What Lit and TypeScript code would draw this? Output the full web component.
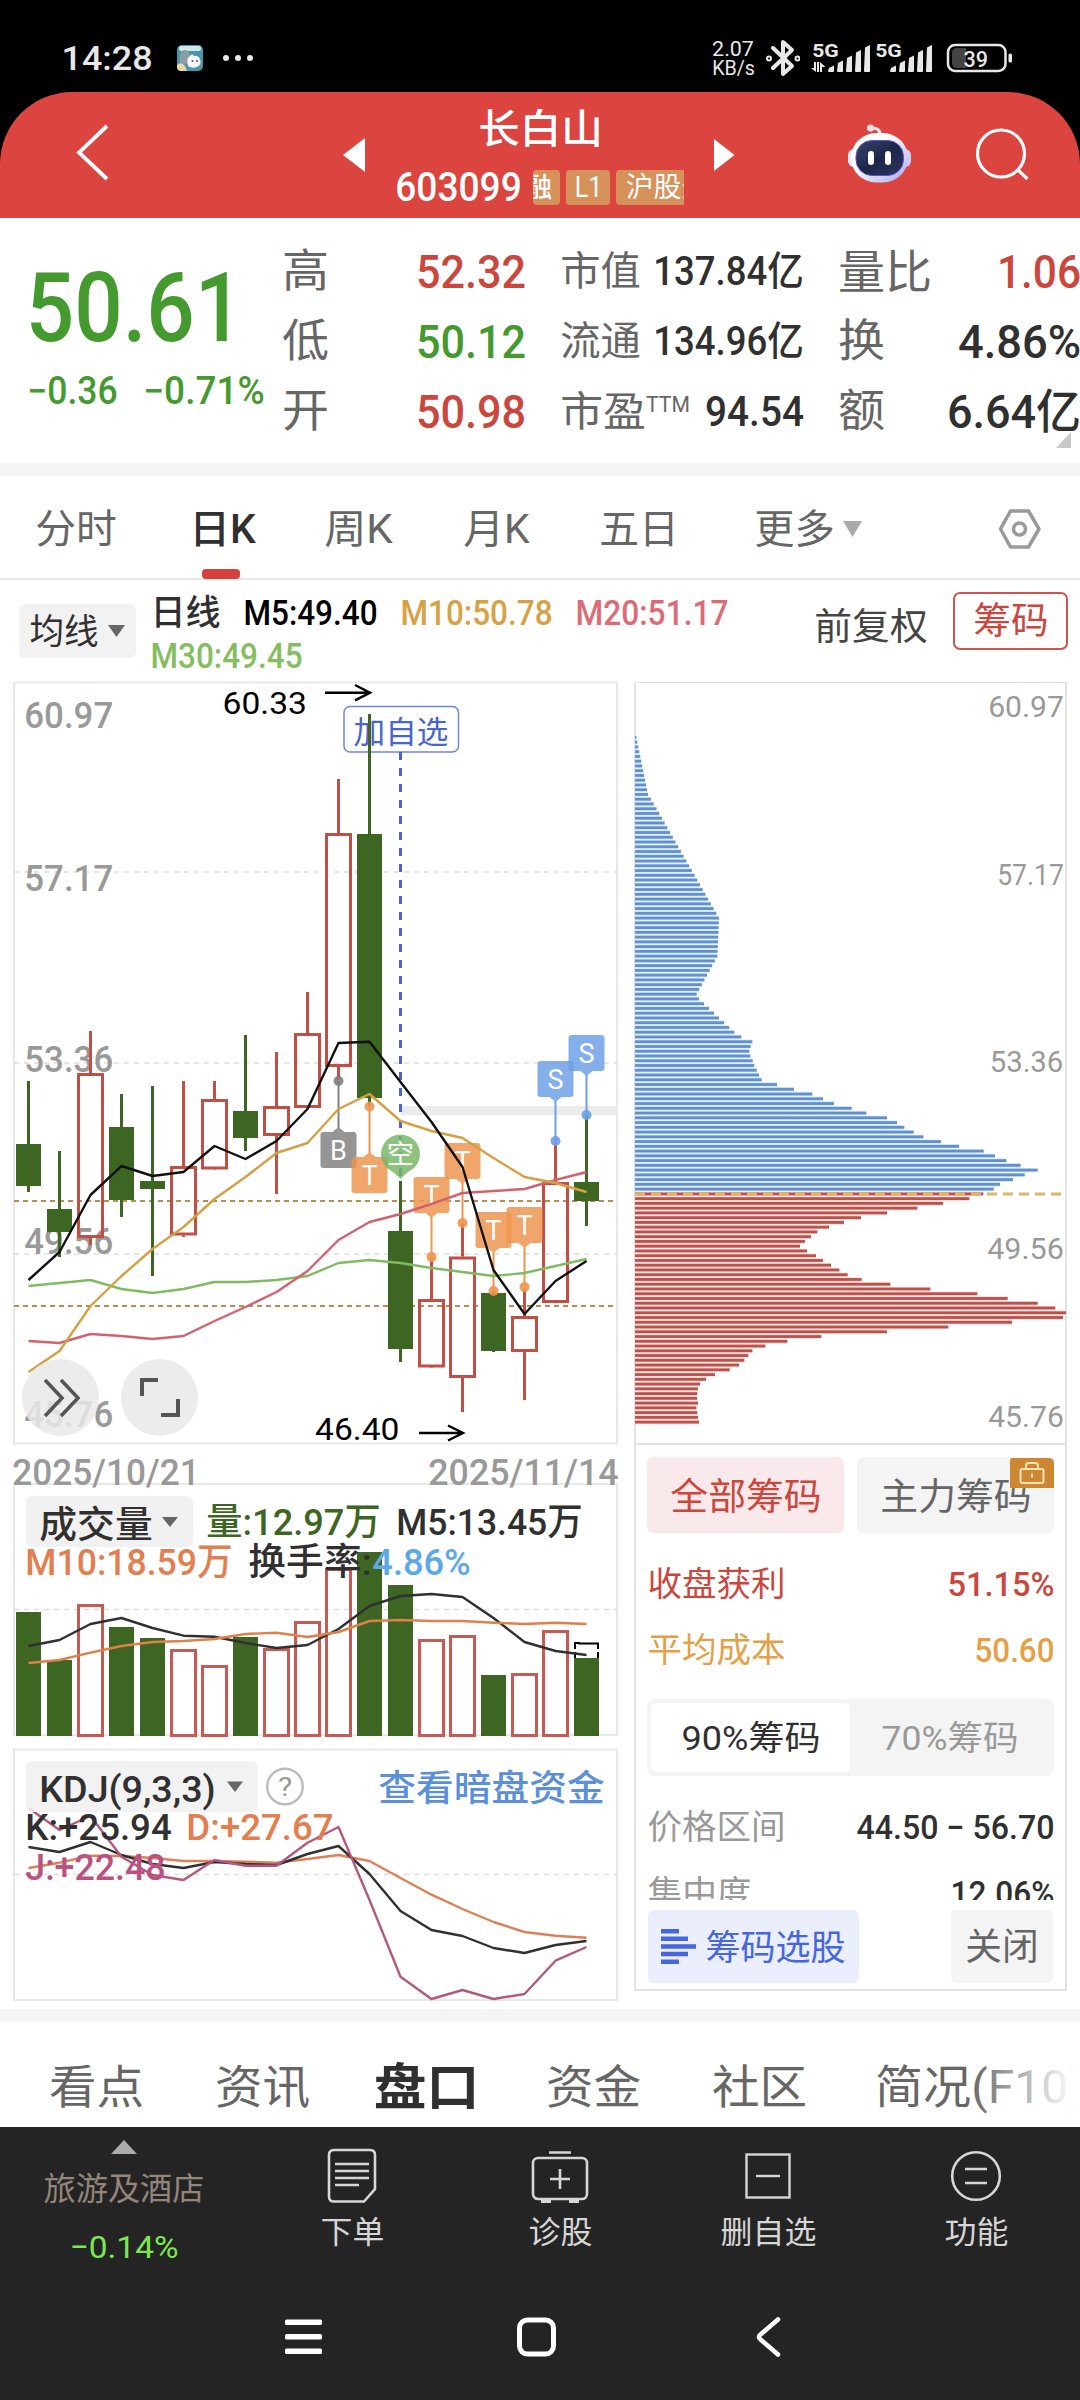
import { LitElement, html, svg, css } from "lit";
import { customElement } from "lit/decorators.js";

type Pt = [number, number];

/** One line of text set to an exact advance width; the box is as tall as the glyphs. */
const fit = (s: string, w: number, size: number, cls = "") => {
  const b = size * 0.045;
  return html`<svg class="fit ${cls}" width=${w} height=${size * 0.74}>
    <text x=${-b} y=${size * 0.73} font-size=${size} textLength=${w + 2 * b} lengthAdjust="spacingAndGlyphs">${s}</text>
  </svg>`;
};

/** Chart label placed by its left edge and baseline. */
const label = (s: string, x: number, y: number, w: number, size: number, cls = "") => {
  const b = size * 0.045;
  return svg`<text class=${cls} x=${x - b} y=${y} font-size=${size} textLength=${w + 2 * b} lengthAdjust="spacingAndGlyphs">${s}</text>`;
};

const STEP = 31;
const cx = (i: number) => 28.5 + i * STEP;
const series = (ys: number[]) => ys.map((y, i) => `${cx(i)},${y}`).join(" ");

/* up?, high, body top, body bottom, low */
const CANDLES: [boolean, number, number, number, number][] = [
  [false, 1081, 1144, 1186, 1192],
  [false, 1151, 1209, 1232, 1257],
  [true, 1031, 1073, 1238, 1245],
  [false, 1094, 1127, 1200, 1217],
  [false, 1086, 1181, 1189, 1276],
  [true, 1081, 1166, 1235.5, 1237],
  [true, 1081, 1099, 1169.5, 1169],
  [false, 1035, 1111, 1138, 1151],
  [true, 1052, 1106, 1136, 1194],
  [true, 992, 1033, 1108, 1108],
  [true, 779, 833, 1067, 1080],
  [false, 714, 834, 1098, 1106],
  [false, 1181, 1231, 1349, 1362],
  [true, 1258, 1299, 1367.5, 1367],
  [true, 1223, 1256.5, 1378, 1412],
  [false, 1291, 1293, 1351, 1352],
  [true, 1288, 1316, 1352, 1400],
  [true, 1142, 1182, 1303, 1302],
  [false, 1115, 1182, 1201, 1226],
];

const MA5 = [1280, 1252, 1195, 1166, 1176, 1172, 1146, 1159, 1141, 1109, 1043, 1041.7, 1082, 1122, 1167, 1270, 1314, 1281, 1261];
const MA10 = [1372, 1351, 1306, 1276, 1249, 1227, 1199, 1177, 1153, 1143, 1109, 1094, 1121, 1131, 1138, 1158, 1177, 1183, 1192];
const MA20 = [1341, 1343, 1334, 1336, 1339, 1336, 1321, 1307, 1292, 1271, 1240, 1222, 1214, 1204, 1193, 1191, 1189, 1180, 1172];
const MA30 = [1286, 1283, 1280, 1289, 1293, 1289, 1282, 1282, 1280, 1276, 1263, 1260, 1263, 1268, 1272, 1276, 1273, 1266, 1259];

const VOLUME = [1612, 1660, 1604, 1627, 1638, 1649, 1665, 1637, 1648, 1621, 1568, 1552, 1585, 1639, 1635, 1675, 1673, 1630, 1658];
const VOL5 = [1646, 1640, 1624, 1618, 1628, 1635.7, 1636.7, 1643, 1648, 1645, 1629, 1606, 1596, 1594, 1597, 1618, 1642, 1651, 1655];
const VOL10 = [1663, 1660, 1652.7, 1646, 1642, 1641, 1639, 1634, 1632.7, 1637, 1632, 1621, 1620, 1621, 1621, 1622.7, 1624, 1622.7, 1624];

const K = [1847, 1852, 1842, 1855, 1864, 1868, 1862, 1864, 1865, 1854, 1846, 1874, 1911, 1930, 1936, 1948, 1953, 1945, 1941];
const D = [1868, 1862.7, 1855.7, 1856, 1858, 1861, 1861, 1861.7, 1862.7, 1859, 1855, 1861, 1878, 1894.7, 1909, 1922, 1932, 1935.7, 1937.7];
const J = [1808, 1830, 1816, 1856.7, 1875, 1880, 1860, 1865.7, 1865.7, 1842.7, 1827, 1900, 1976.7, 1999, 1990, 1999, 1994, 1960.7, 1947];

/* Chip distribution: sparse [row, length×3] knots, filled in linearly. */
const KNOTS: Pt[] = [[0, 4], [12, 39], [13, 48], [38, 252], [46, 247], [54, 185], [55, 192], [59, 252], [62, 298], [63, 319], [64, 352], [65, 347], [66, 343], [67, 346]];
const CHIP_ROWS: number[] = [];
for (let k = 0; k < KNOTS.length - 1; k++) {
  const [r0, v0] = KNOTS[k];
  const [r1, v1] = KNOTS[k + 1];
  for (let r = r0; r < r1; r++) CHIP_ROWS.push((v0 + ((v1 - v0) * (r - r0)) / (r1 - r0)) / 3);
}
CHIP_ROWS.push(346 / 3);
[397, 402, 409, 416, 424, 470, 521, 576, 608, 641, 694, 738, 800, 830, 852, 880, 909, 962, 1016, 1090, 1124, 1158, 1201, 1252, 1213, 1178, 1139, 1120,
  1089, 1047, 968, 891, 800, 722, 671, 626, 591, 572, 554, 539, 560, 587, 608, 632, 657, 682, 724, 810, 930, 1071, 1162, 1252, 1305, 1337, 1328, 1175, 984, 800,
  603, 501, 435, 396, 384, 372, 356, 328, 284, 257, 239, 233, 231, 230, 233, 228, 231, 233, 236].forEach((v) => CHIP_ROWS.push((v - 44) / 3));
const FIRST_RED = 96;

/* letter, column, flag top, dot y, flag hangs below the dot */
const FLAGS: [string, number, number, number, boolean][] = [
  ["B", 10, 1132, 1081, true],
  ["T", 11, 1157, 1106.5, true],
  ["T", 13, 1177, 1257, false],
  ["T", 14, 1143, 1223, false],
  ["T", 15, 1212, 1291, false],
  ["T", 16, 1207, 1287, false],
  ["S", 17, 1061, 1141, false],
  ["S", 18, 1035, 1115, false],
];

const fonts = css`
  text {
    font-family: Roboto, "Noto Sans CJK SC", sans-serif;
    fill: currentColor;
    white-space: pre;
  }
  .fit { display: block; overflow: visible; flex: none; }
  .m text, text.m { font-weight: 500; }
  .b text, text.b { font-weight: 700; }
  .red { color: #cb473e; }
  .green { color: #449a2f; }
  .grey { color: #666; }
  .dim { color: #999; }
  .dark { color: #303030; }
`;

@customElement("status-bar")
class StatusBar extends LitElement {
  static styles = [fonts, css`
    :host { display: block; }
    .bar {
      height: 92px; padding: 24px 0 0 63px; box-sizing: border-box; color: #e8e8e8;
      display: grid; grid-template-columns: 114px 45px 491px 53px 45px 135px 70px; align-items: center;
      background: #000;
    }
    .speed { display: grid; gap: 5px; }
  `];
  render() {
    const bars = (x: number) => [0, 1, 2, 3, 4].map((i) => {
      const top = [65, 60, 55, 49.5, 44.5][i];
      return svg`<path d="M${x + i * 9} ${top + 2}l5-2.5V70q0 1-1 1h-4q-1 0-1-1z"/>`;
    });
    return html`<div class="bar">
      ${fit("14:28", 88, 34, "m")}
      <svg width="26" height="26" viewBox="0 0 26 26">
        <rect width="26" height="26" rx="5" fill="#4a96a8" />
        <rect x="2" y="1" width="22" height="5" rx="2" fill="#cfeaea" />
        <path d="M3 17V10q1-5 5-5t5 6v8H4z" fill="#8b9da1" />
        <path d="M11 21q-2-8 2-10l2-2 2 2q4-1 6 3 2 6-3 8-5 2-9-1z" fill="#f7f7f7" />
        <circle cx="15.500" cy="16" r="1" fill="#555" /><circle cx="20" cy="16" r="1" fill="#555" />
        <path d="M0 20q4-4 8 1l2 5H4q-4 0-4-4z" fill="#e8d9a4" />
      </svg>
      <svg width="32" height="8" fill="#e8e8e8"><circle cx="4" cy="4" r="3" /><circle cx="16" cy="4" r="3" /><circle cx="28" cy="4" r="3" /></svg>
      <div class="speed">${fit("2.07", 40, 20)}${fit("KB/s", 41, 19.5)}</div>
      <svg width="34" height="38" viewBox="764 38 34 38" fill="none" stroke="#e8e8e8" stroke-width="4" stroke-linejoin="round" stroke-linecap="round">
        <path d="M771 47l19 18-9 8V41l9 8-19 18" />
        <circle cx="767" cy="57.500" r="1" /><circle cx="795.500" cy="57.500" r="1" />
      </svg>
      <svg width="124" height="34" viewBox="811 40 124 34" fill="#e8e8e8">
        ${label("5G", 813, 56, 25, 18.5, "b")}
        <path d="M811 67h3v-6h2v10zM817 61h2v10h-2zM820 71V61l5.500 5h-3.500v5z" />
        ${bars(829)}
        ${label("5G", 876, 56, 25, 18.5, "b")}
        ${bars(891)}
      </svg>
      <svg width="66" height="30" viewBox="945 42.500 66 30">
        <rect x="947" y="44.500" width="57.500" height="26" rx="7" fill="none" stroke="#e8e8e8" stroke-width="2.500" />
        <path d="M956 47.500h9v20h-9q-5 0-5-5v-10q0-5 5-5z" fill="#444" />
        <rect x="1007.500" y="53" width="3.500" height="9" rx="1.500" fill="#e8e8e8" />
        ${label("39", 963.5, 66, 22.5, 22.5, "m")}
      </svg>
    </div>`;
  }
}

@customElement("title-bar")
class TitleBar extends LitElement {
  static styles = [fonts, css`
    :host { display: block; background: #000; }
    .bar {
      height: 126px; background: #dc4440; border-radius: 72px 72px 0 0; color: #fff;
      display: grid; grid-template-columns: 76px 266px 53px 291px 53px 108px 128px 105px; align-items: start;
    }
    .bar > svg { margin-top: 31px; }
    .bar > .next { margin-left: 26px; }
    .name { display: grid; justify-items: center; padding-top: 22px; }
    .line { display: flex; align-items: center; margin-top: 26px; height: 35px; }
    .tags { display: flex; gap: 6px; width: 151px; margin-left: 13px; overflow: hidden; }
    .tag { background: #d7915b; height: 35px; border-radius: 4px; display: flex; align-items: center; justify-content: center; flex: none; }
    .t1 { width: 27px; justify-content: flex-end; padding-right: 9px; box-sizing: border-box; overflow: hidden; }
    .t2 { width: 44px; }
    .t3 { width: 110px; justify-content: flex-start; padding-left: 11px; gap: 3px; }
  `];
  render() {
    return html`<div class="bar">
      <span></span>
      <svg width="34" height="60" viewBox="75 123 34 60" fill="none" stroke="#fff" stroke-width="3.800"><path d="M106 126L78 152.500l28 26.500" /></svg>
      <svg width="24" height="60" viewBox="342 123 24 60" fill="#fff"><path d="M365 138v34l-22-17z" /></svg>
      <div class="name">
        ${fit("长白山", 121, 40, "m")}
        <div class="line">
          ${fit("603099", 123, 40, "m")}
          <div class="tags">
            <div class="tag t1">${fit("融", 27, 27, "m")}</div>
            <div class="tag t2">${fit("L1", 25, 29)}</div>
            <div class="tag t3">${fit("沪股", 53, 28)}${fit("通", 27, 28)}</div>
          </div>
        </div>
      </div>
      <svg class="next" width="24" height="60" viewBox="712 123 24 60" fill="#fff"><path d="M714 139v32l20.500-16z" /></svg>
      <span></span>
      <svg width="68" height="62" viewBox="847 122 68 62">
        <defs>
          <linearGradient id="shell" x1="0" y1="0" x2="1" y2="1"><stop offset=".35" stop-color="#fff" /><stop offset="1" stop-color="#a9a8ee" /></linearGradient>
          <linearGradient id="visor" x1="0" y1="0" x2="1" y2="1"><stop stop-color="#39466a" /><stop offset=".5" stop-color="#1c2648" /><stop offset="1" stop-color="#2b3560" /></linearGradient>
        </defs>
        <path d="M871 127q9-1 9.500 8" fill="none" stroke="#f3e9f4" stroke-width="3" />
        <circle cx="870.500" cy="127" r="3.500" fill="#f3dfe6" />
        <rect x="848" y="148" width="12" height="18" rx="6" fill="#e9e8fb" />
        <rect x="899" y="148" width="12" height="18" rx="6" fill="#cfcdf5" />
        <rect x="851" y="132" width="57" height="49.500" rx="25" fill="url(#shell)" />
        <rect x="856" y="139.500" width="47.500" height="35" rx="16" fill="url(#visor)" stroke="#5a4fd0" stroke-width="1" />
        <rect x="868" y="150" width="6" height="14" rx="3" fill="#fff" />
        <rect x="885" y="150" width="6" height="14" rx="3" fill="#fff" />
      </svg>
      <svg width="56" height="60" viewBox="975 123 56 60" fill="none" stroke="#fff" stroke-width="3.200"><circle cx="1001" cy="153.500" r="23.500" /><path d="M1018 170l9.500 9" /></svg>
    </div>`;
  }
}

@customElement("quote-panel")
class QuotePanel extends LitElement {
  static styles = [fonts, css`
    :host { display: block; background: #fff; }
    .panel { height: 245px; display: grid; grid-template-columns: 284px 278px 278px 240px; position: relative; }
    .price { padding: 53px 0 0 30px; }
    .price > .chg { display: grid; grid-template-columns: 116px 120px; margin-top: 34px; margin-left: -1px; }
    .col { padding-top: 18px; display: grid; grid-auto-rows: 70px; align-content: start; }
    .r { display: flex; justify-content: space-between; align-items: center; padding-right: 38px; }
    .last .r { padding-right: 1px; }
    .pe { display: flex; gap: 3px; }
    .fold { position: absolute; right: 9px; bottom: 15px; }
  `];
  render() {
    return html`<div class="panel">
      <div class="price green">
        ${fit("50.61", 209, 96, "m")}
        <div class="chg">${fit("−0.36", 87, 38, "m")}${fit("−0.71%", 118, 38, "m")}</div>
      </div>
      <div class="col">
        <div class="r">${fit("高", 43, 45, "grey")}${fit("52.32", 106, 47, "red m")}</div>
        <div class="r">${fit("低", 43, 45, "grey")}${fit("50.12", 106, 47, "green m")}</div>
        <div class="r">${fit("开", 43, 45, "grey")}${fit("50.98", 106, 47, "red m")}</div>
      </div>
      <div class="col">
        <div class="r">${fit("市值", 77, 40, "grey")}${fit("137.84亿", 147, 40, "dark m")}</div>
        <div class="r">${fit("流通", 77, 40, "grey")}${fit("134.96亿", 147, 40, "dark m")}</div>
        <div class="r"><div class="pe">${fit("市盈", 82, 41, "grey")}${fit("TTM", 42, 22, "grey")}</div>${fit("94.54", 95, 43, "dark m")}</div>
      </div>
      <div class="col last">
        <div class="r">${fit("量比", 90, 46, "grey")}${fit("1.06", 80, 47, "red m")}</div>
        <div class="r">${fit("换", 43, 45, "grey")}${fit("4.86%", 119, 47, "dark m")}</div>
        <div class="r">${fit("额", 43, 45, "grey")}${fit("6.64亿", 130, 47, "dark m")}</div>
      </div>
      <svg class="fold" width="15" height="16"><path d="M15 0v16H0z" fill="#c9c9c9" /></svg>
    </div>`;
  }
}

@customElement("period-tabs")
class PeriodTabs extends LitElement {
  static styles = [fonts, css`
    :host { display: block; background: #fff; border-top: 13px solid #f4f4f4; }
    .tabs {
      height: 104px; box-sizing: border-box; border-bottom: 2px solid #e8e8e8; padding: 3px 0 0 37px;
      display: grid; grid-template-columns: 154px 135px 139px 136px 155px 87px 155px 60px; align-items: center;
    }
    .on { position: relative; }
    .on i { position: absolute; left: 11px; top: 55px; width: 38px; height: 10px; border-radius: 4px; background: #d5403c; }
    .ma { height: 102px; display: grid; grid-template-columns: 133px 664px 137px 126px; padding-left: 19px; align-items: start; }
    .chip { margin-top: 24px; width: 117px; height: 54px; background: #f2f2f2; border-radius: 6px; display: flex; align-items: center; gap: 11px; padding-left: 12px; box-sizing: border-box; }
    .l1 { display: flex; padding-top: 19px; align-items: center; gap: 26px; }
    .l2 { padding-top: 17px; }
    .m10 { color: #d7a245; }
    .m20 { color: #dd6a77; }
    .m30 { color: #84be5f; }
    .adj { padding-top: 33px; color: #444; }
    .box { margin-top: 12px; width: 115px; height: 58px; box-sizing: border-box; border: 2px solid #cf5450; border-radius: 7px; display: grid; place-items: center; }
  `];
  render() {
    return html`<div class="tabs">
        ${fit("分时", 78, 40, "grey")}
        <div class="on">${fit("日K", 63, 40, "dark m")}<i></i></div>
        ${fit("周K", 65, 40, "grey")}
        ${fit("月K", 63, 40, "grey")}
        ${fit("五日", 76, 40, "grey")}
        ${fit("更多", 77, 40, "grey")}
        <svg width="20" height="18"><path d="M0 1h19L9.500 17z" fill="#aaa" /></svg>
        <svg width="44" height="44" viewBox="0 0 44 44" fill="none" stroke="#999" stroke-width="3.500" stroke-linejoin="round">
          <path d="M12.500 4h18L41 22 30.500 40h-18L2.500 22z" /><circle cx="21.500" cy="22" r="6" />
        </svg>
      </div>
      <div class="ma">
        <div class="chip">${fit("均线", 66, 35, "dark")}<svg width="17" height="12"><path d="M0 0h17L8.500 12z" fill="#666" /></svg></div>
        <div>
          <div class="l1">
            ${fit("日线", 67, 35, "dark m")}
            ${fit("M5:49.40", 131, 35, "m")}
            <span class="m10">${fit("M10:50.78", 149, 35, "m")}</span>
            <span class="m20">${fit("M20:51.17", 150, 35, "m")}</span>
          </div>
          <div class="l2 m30">${fit("M30:49.45", 149, 35, "m")}</div>
        </div>
        <div class="adj">${fit("前复权", 110, 37)}</div>
        <div class="box red">${fit("筹码", 72, 37)}</div>
      </div>`;
  }
}

@customElement("kline-charts")
class KlineCharts extends LitElement {
  static styles = [fonts, css`
    :host { display: block; color: #303030; }
    svg { display: block; overflow: visible; }
    polyline { fill: none; stroke-width: 2.4; stroke-linejoin: round; }
    .grid { stroke: #ddd; stroke-width: 1.4; stroke-dasharray: 5 5; fill: none; }
    .frame { fill: #fff; stroke: #e8e8e8; stroke-width: 2; }
    .open { fill: none; }
    .up { fill: none; stroke: #c24f46; stroke-width: 3; }
    .down { fill: #3e6623; stroke: none; }
    .white { fill: #fff; }
    .blue { fill: #4765d2; }
    .vol { fill: #3e6623; }
    .org { fill: #e27e50; }
    .sky { fill: #5da9e8; }
    .jj { fill: #b9527f; }
    .link { fill: #5b8fd9; }
    .black { fill: #000; }
  `];

  candle([up, hi, top, bot, lo]: [boolean, number, number, number, number], i: number) {
    const x = cx(i);
    return up
      ? svg`<path class="up" d="M${x} ${hi}V${top}M${x} ${bot}V${lo}"/><rect class="up" x=${x - 12} y=${top + 1.5} width="24" height=${bot - top - 3}/>`
      : svg`<rect class="down" x=${x - 1.5} y=${hi} width="3" height=${lo - hi}/><rect class="down" x=${x - 12.5} y=${top} width="25" height=${bot - top}/>`;
  }

  flag([ch, col, top, dot, below]: [string, number, number, number, boolean]) {
    const x = cx(col);
    const fill = ch === "B" ? "#808080" : ch === "T" ? "#ee954d" : "#6d9fe6";
    const tip = below ? `M${x - 6} ${top}L${x} ${top - 5}L${x + 6} ${top}` : `M${x - 6} ${top + 36}L${x} ${top + 41}L${x + 6} ${top + 36}`;
    return svg`
      <path d="M${x} ${dot}V${below ? top - 4 : top + 40}" stroke=${fill} stroke-width="2"/>
      <circle cx=${x} cy=${dot} r="5" fill=${fill} opacity=".9"/>
      <g fill=${fill} opacity=".83"><rect x=${x - 18} y=${top} width="36" height="36" rx="3"/><path d=${tip}/></g>
      <text class="white" x=${x} y=${top + 27.5} font-size="27" text-anchor="middle">${ch}</text>`;
  }

  render() {
    return html`<svg width="604" height="1320" viewBox="14 682 604 1320">
      <rect class="frame" x="14" y="682.500" width="603" height="761" />
      <path class="grid" d="M14 872H617M14 1063H617M14 1254H617" />
      ${label("60.97", 26, 727.5, 85.5, 37.5, "dim m")}
      ${label("57.17", 26, 890.5, 85.5, 37.5, "dim m")}
      ${label("53.36", 26, 1072, 85.5, 37.5, "dim m")}
      ${label("49.56", 26, 1254, 85.5, 37.5, "dim m")}
      ${label("45.76", 26, 1427, 85.5, 37.5, "dim m")}
      <rect x="401" y="1106" width="217" height="9" fill="#ebebeb" />
      <path d="M14 1201H617M14 1306H617" stroke="#b98d52" stroke-width="1.800" stroke-dasharray="5 4" />
      <rect x="344" y="706.500" width="114.500" height="45.500" rx="6" fill="#fff" stroke="#6a88d8" stroke-width="1.500" />
      ${label("加自选", 355, 743, 92, 31, "blue")}
      <path d="M400.500 752V1181" stroke="#4765d2" stroke-width="3" stroke-dasharray="8 8" />
      ${CANDLES.map((c, i) => this.candle(c, i))}
      ${FLAGS.map((f) => this.flag(f))}
      <path d="M387 1168a19.500 19.500 0 1 1 27 0q-7 4-13.500 11q-6.500-7-13.500-11z" fill="#76b765" opacity=".83" />
      ${label("空", 388, 1163, 25, 26, "white")}
      <polyline points=${series(MA30)} stroke="#80bb62" />
      <polyline points=${series(MA20)} stroke="#d3626f" />
      <polyline points=${series(MA10)} stroke="#d5a043" />
      <polyline points=${series(MA5)} stroke="#111" />
      ${label("60.33", 224, 714, 81.5, 31.5, "black")}
      ${label("46.40", 316.5, 1439.5, 81.5, 31.5, "black")}
      <path d="M325 692.700H369M355 685l15 7.700-15 7.700M419 1433H462M448 1425.500l15 7.500-15 7.500" fill="none" stroke="#000" stroke-width="2.400" />
      <g fill="#e9e9e9" opacity=".86"><circle cx="60.500" cy="1397.500" r="38.500" /><circle cx="159.500" cy="1397.500" r="38.500" /></g>
      <g fill="none" stroke="#555" stroke-width="4">
        <path d="M45 1380l17 18-17 18M61 1380l17 18-17 18" stroke-width="3.600" />
        <path d="M158 1380h-16v16M178 1399v16h-17" />
      </g>

      <rect class="frame open" x="14" y="1484" width="603" height="251" />
      ${label("2025/10/21", 14, 1485, 184, 37.5, "dim m")}
      ${label("2025/11/14", 430, 1485, 187, 37.5, "dim m")}
      <path class="grid" d="M14 1609.500H617" />
      <rect x="26" y="1496" width="167" height="51" rx="6" fill="#f1f1f1" />
      ${VOLUME.map((y, i) => CANDLES[i][0]
        ? svg`<rect x=${cx(i) - 12} y=${y + 1.5} width="24" height=${1736 - y - 2} fill="none" stroke="#c65a54" stroke-width="3"/>`
        : svg`<rect class="down" x=${cx(i) - 12.5} y=${y} width="25" height=${1736 - y}/>`)}
      <path d="M575 1649v-6h5M585 1643.500h5M594 1643.500h4v5.500M598 1652v6M575 1652v6M578 1643.500h18" fill="none" stroke="#000" stroke-width="2" />
      <polyline points=${series(VOL5)} stroke="#303030" />
      <polyline points=${series(VOL10)} stroke="#dd8049" />
      ${label("成交量", 41, 1538, 110, 37, "m")}
      <path d="M162 1517h16l-8 10z" fill="#666" />
      ${label("量:12.97万", 208, 1535, 171, 37, "vol m")}
      ${label("M5:13.45万", 398, 1535, 183, 37, "m")}
      ${label("M10:18.59万", 27, 1575, 204, 37, "org m")}
      ${label("换手率:", 250, 1575, 120, 37, "m")}
      ${label("4.86%", 374, 1575, 95, 37, "sky m")}

      <rect class="frame" x="14" y="1749.500" width="603" height="250.500" />
      <path class="grid" d="M14 1874.500H617" />
      <polyline points=${series(D)} stroke="#dd8058" />
      <polyline points=${series(K)} stroke="#303030" />
      <polyline points=${series(J)} stroke="#b3597f" />
      <rect x="26" y="1761" width="232" height="51" rx="6" fill="#f1f1f1" opacity=".9" />
      ${label("KDJ(9,3,3)", 41, 1802, 173, 37.5, "m")}
      <path d="M227 1781.500h16l-8 10.500z" fill="#666" />
      <circle cx="285" cy="1786.500" r="17.800" fill="none" stroke="#bbb" stroke-width="2.400" />
      ${label("?", 279, 1795.5, 12, 25, "dim")}
      ${label("查看暗盘资金", 380, 1801, 223, 36, "link m")}
      ${label("K:+25.94", 27, 1840, 143, 37.5, "m")}
      ${label("D:+27.67", 188, 1840, 144, 37.5, "org m")}
      ${label("J:+22.48", 27, 1880, 137, 37.5, "jj m")}
    </svg>`;
  }
}

@customElement("chip-panel")
class ChipPanel extends LitElement {
  static styles = [fonts, css`
    :host { display: block; }
    .panel { width: 433px; height: 1309px; box-sizing: border-box; border: 2px solid #e2e2e2; border-top-width: 1px; background: #fff; }
    .chart { display: block; border-bottom: 2px solid #e2e2e2; }
    .info { padding: 12px 11px 0 11px; }
    .two { display: grid; grid-template-columns: 197px 197px; justify-content: space-between; }
    .btn { height: 76px; border-radius: 6px; display: grid; place-items: center; background: #f4f4f4; position: relative; padding-top: 3px; box-sizing: border-box; }
    .on { background: #fae9ea; }
    .lock { position: absolute; right: 0; top: 1px; width: 44px; height: 30px; background: #cd8733; border-radius: 2px 5px 0 0; display: grid; place-items: center; }
    .kv { display: flex; justify-content: space-between; align-items: center; padding: 0 1px 0 2px; height: 66px; }
    .first { margin-top: 18px; }
    .amber { color: #e59f46; }
    .seg { margin-top: 16px; height: 77px; border-radius: 8px; background: #f4f4f4; display: grid; grid-template-columns: 199px 1fr; padding: 4px; box-sizing: border-box; place-items: center; }
    .seg .sel { background: #fff; border-radius: 5px; width: 199px; height: 69px; display: grid; place-items: center; }
    .range { margin-top: 18px; }
    .clip { height: 40px; overflow: hidden; }
    .foot { display: flex; justify-content: space-between; margin-top: 10px; padding: 0 1px; }
    .pick { width: 211px; height: 73px; border-radius: 6px; background: #ebeefd; color: #4566dc; display: flex; align-items: center; gap: 11px; padding-left: 13px; box-sizing: border-box; }
    .close { width: 102px; height: 73px; border-radius: 6px; background: #f4f4f4; display: grid; place-items: center; }
  `];
  render() {
    return html`<div class="panel">
      <svg class="chart" width="429" height="760" viewBox="636 683 429 760" overflow="visible">
        ${CHIP_ROWS.map((w, i) => {
          const y = 737.4 + i * 4.755;
          const red = i >= FIRST_RED;
          return svg`<rect x="635" y=${y - 2.3} width=${w} height="4.600" fill=${red ? "#f8dcda" : "#d6ecfb"}/><rect x="635" y=${y - 1.4} width=${w} height="2.800" fill=${red ? "#bd5049" : "#628fcf"}/>`;
        })}
        <path d="M635 1194H1062" stroke="#e0b562" stroke-width="3.200" stroke-dasharray="10 6" />
        ${label("60.97", 989.5, 717, 73, 29, "dim")}
        ${label("57.17", 998.5, 885, 64, 29, "dim")}
        ${label("53.36", 991, 1072, 71, 29, "dim")}
        ${label("49.56", 988.5, 1259, 74, 29, "dim")}
        ${label("45.76", 989.5, 1427, 73, 29, "dim")}
      </svg>
      <div class="info">
        <div class="two">
          <div class="btn on red">${fit("全部筹码", 148, 37)}</div>
          <div class="btn grey">${fit("主力筹码", 148, 37)}
            <div class="lock"><svg width="26" height="24" fill="none" stroke="#fbe3b5" stroke-width="2"><rect x="1.500" y="8" width="23" height="14" rx="2" /><path d="M7 8V5q0-3 3-3h6q3 0 3 3v3M13 12.500v4" /></svg></div>
          </div>
        </div>
        <div class="kv first red">${fit("收盘获利", 135, 34)}${fit("51.15%", 104, 33, "m")}</div>
        <div class="kv amber">${fit("平均成本", 135, 34)}${fit("50.60", 77, 33, "m")}</div>
        <div class="seg"><div class="sel">${fit("90%筹码", 136, 34, "dark")}</div>${fit("70%筹码", 134, 34, "dim")}</div>
        <div class="kv range">${fit("价格区间", 135, 34, "dim")}${fit("44.50 − 56.70", 195, 33, "dark m")}</div>
        <div class="clip"><div class="kv">${fit("集中度", 101, 34, "dim")}${fit("12.06%", 101, 33, "dark m")}</div></div>
        <div class="foot">
          <div class="pick">
            <svg width="35" height="35" fill="#4566dc"><path d="M0 0h18v4.500H0zM0 7.600h27v4.500H0zM0 15.200h35v4.500H0zM0 22.800h27v4.500H0zM0 30.400h18v4.500H0z" /></svg>
            ${fit("筹码选股", 137, 35)}
          </div>
          <div class="close grey">${fit("关闭", 70, 37)}</div>
        </div>
      </div>
    </div>`;
  }
}

@customElement("bottom-area")
class BottomArea extends LitElement {
  static styles = [fonts, css`
    :host { display: block; }
    .tabs {
      height: 118px; border-top: 13px solid #f4f4f4; box-sizing: border-box; background: #fff; padding: 23px 0 0 51px; overflow: hidden;
      display: grid; grid-template-columns: 166px 159px 172px 166px 163px 203px; align-items: center; position: relative;
    }
    .fade { position: absolute; right: 0; bottom: 0; top: 0; width: 110px; background: linear-gradient(90deg, rgba(255,255,255,0), #fff 95%); }
    .dock { height: 273px; background: #242424; color: #d6d6d6; }
    .nav { height: 153px; display: grid; grid-template-columns: 248px 208px 208px 208px 208px; }
    .sector { display: flex; flex-direction: column; align-items: center; padding-top: 13px; color: #938579; }
    .sector .n { margin-top: 23px; }
    .sector .p { margin-top: 34px; color: #7be852; }
    .it { display: flex; flex-direction: column; align-items: center; padding-top: 21px; gap: 16px; }
    .sys { display: grid; grid-template-columns: 232px 239px 50px; padding: 34px 0 0 285px; align-items: center; }
  `];
  render() {
    return html`<div class="tabs">
        ${fit("看点", 91, 46, "grey")}${fit("资讯", 91, 46, "grey")}${fit("盘口", 101, 50, "dark b")}${fit("资金", 91, 46, "grey")}${fit("社区", 91, 46, "grey")}${fit("简况(F10)", 206, 46, "grey")}
        <div class="fade"></div>
      </div>
      <div class="dock">
        <div class="nav">
          <div class="sector">
            <svg width="26" height="14"><path d="M13 0l13 14H0z" fill="#aaa" /></svg>
            <div class="n">${fit("旅游及酒店", 158, 32)}</div>
            <div class="p">${fit("−0.14%", 106, 32)}</div>
          </div>
          <div class="it">
            <svg width="50" height="56" viewBox="0 0 50 56" fill="none" stroke="#d6d6d6" stroke-width="2.600">
              <path d="M7 2h36q5 0 5 5v34L37 53.500H7q-5 0-5-5V7q0-5 5-5zM8 16h34M8 23h34M8 30h34M8 37h24" />
            </svg>
            ${fit("下单", 61, 31)}
          </div>
          <div class="it">
            <svg width="58" height="56" viewBox="0 0 58 56" fill="none" stroke="#d6d6d6" stroke-width="2.600">
              <rect x="2" y="10" width="54" height="41" rx="5" /><path d="M18 4.500h22M29 21v20M19 31h20" /><path d="M10 53h10M38 53h10" stroke-width="4" />
            </svg>
            ${fit("诊股", 61, 31)}
          </div>
          <div class="it">
            <svg width="46" height="56" viewBox="0 0 46 56" fill="none" stroke="#d6d6d6" stroke-width="2.400">
              <rect x="1.500" y="6.500" width="43" height="43" /><path d="M11 28h24" />
            </svg>
            ${fit("删自选", 93, 31)}
          </div>
          <div class="it">
            <svg width="52" height="56" viewBox="0 0 52 56" fill="none" stroke="#d6d6d6" stroke-width="2.600">
              <circle cx="26" cy="28" r="23.800" /><path d="M15 21h22M15 35h22" />
            </svg>
            ${fit("功能", 61, 31)}
          </div>
        </div>
        <div class="sys">
          <svg width="38" height="46" fill="#fff"><rect y="5.500" width="37" height="5.600" rx="1.500" /><rect y="20" width="37" height="5.600" rx="1.500" /><rect y="34.500" width="37" height="5.600" rx="1.500" /></svg>
          <svg width="40" height="46" fill="none" stroke="#fff" stroke-width="5"><rect x="2.500" y="6" width="34" height="34" rx="8" /></svg>
          <svg width="26" height="46" fill="none" stroke="#fff" stroke-width="4.600" stroke-linecap="round" stroke-linejoin="round"><path d="M22 5.500L4.500 20.500q-3 2.500 0 5L22 40.500" /></svg>
        </div>
      </div>`;
  }
}

@customElement("app-root")
class AppRoot extends LitElement {
  static styles = css`
    :host { display: block; width: 1080px; height: 2400px; overflow: hidden; background: #fff; }
    .charts { display: grid; grid-template-columns: 620px 433px; padding-left: 14px; height: 1327px; align-items: start; }
  `;
  render() {
    return html`
      <status-bar></status-bar>
      <title-bar></title-bar>
      <quote-panel></quote-panel>
      <period-tabs></period-tabs>
      <div class="charts"><kline-charts></kline-charts><chip-panel></chip-panel></div>
      <bottom-area></bottom-area>
    `;
  }
}
